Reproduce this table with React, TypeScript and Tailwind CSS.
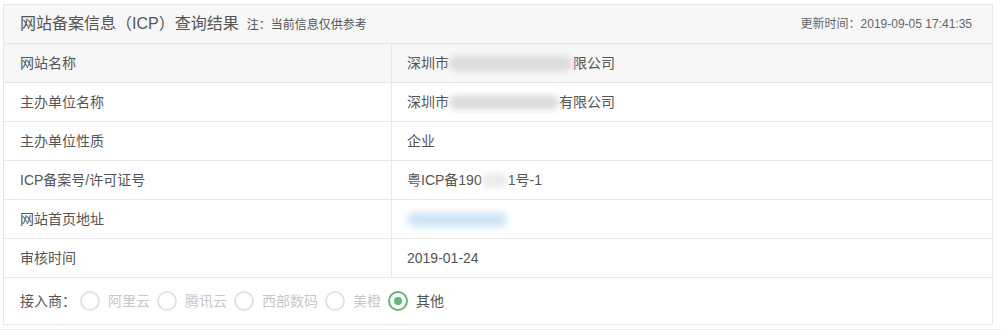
const FONT = "font-['Liberation_Sans','Noto_Sans_CJK_SC',sans-serif]";

type Row = { label: string; value: React.ReactNode; shaded?: boolean };

function Blur({ w, tone = 'gray' }: { w: number; tone?: 'gray' | 'blue' | 'light' }) {
  const bg = tone === 'blue' ? 'bg-[#cfe6f7]' : tone === 'light' ? 'bg-[#ebebeb]' : 'bg-[#dcdcdc]';
  return (
    <span
      className={`inline-block h-[15px] rounded-full blur-[3px] align-middle ${bg}`}
      style={{ width: w }}
    />
  );
}

const rows: Row[] = [
  {
    label: '网站名称',
    shaded: true,
    value: (
      <>
        深圳市<Blur w={124} />限公司
      </>
    ),
  },
  {
    label: '主办单位名称',
    value: (
      <>
        深圳市<Blur w={110} />有限公司
      </>
    ),
  },
  { label: '主办单位性质', value: '企业' },
  {
    label: 'ICP备案号/许可证号',
    value: (
      <>
        粤ICP备190<Blur w={26} tone="light" />1号-1
      </>
    ),
  },
  { label: '网站首页地址', value: <Blur w={100} tone="blue" /> },
  { label: '审核时间', value: '2019-01-24' },
];

const isps = ['阿里云', '腾讯云', '西部数码', '美橙', '其他'];

function Radio({ checked }: { checked?: boolean }) {
  return (
    <span
      className={`flex h-[20px] w-[20px] shrink-0 items-center justify-center rounded-full border-2 ${
        checked ? 'border-[#5fb878]' : 'border-[#e2e2e2]'
      }`}
    >
      {checked && <span className="h-[8px] w-[8px] rounded-full bg-[#5fb878]" />}
    </span>
  );
}

export default function App() {
  return (
    <div className={`${FONT} h-[330px] w-[1001px] overflow-hidden bg-white text-[#555]`}>
      <div className="pl-[3px] pt-[4px]">
        <div className="w-[990px] border border-[#e8e8e8]">
          <div className="flex h-[39px] items-center justify-between border-b border-[#e8e8e8] bg-[#f7f7f7] pl-[16px] pr-[20px]">
            <div className="flex items-baseline gap-[8px]">
              <span className="text-[16px]">网站备案信息（ICP）查询结果</span>
              <span className="text-[12px]">注：当前信息仅供参考</span>
            </div>
            <span className="text-[12px] text-[#666]">更新时间：2019-09-05 17:41:35</span>
          </div>

          {rows.map((row) => (
            <div
              key={row.label}
              className={`grid h-[39px] grid-cols-[388px_1fr] border-b border-[#e8e8e8] text-[14px] ${
                row.shaded ? 'bg-[#f7f7f7]' : 'bg-white'
              }`}
            >
              <div className="flex items-center border-r border-[#e8e8e8] pl-[16px]">{row.label}</div>
              <div className="flex items-center whitespace-nowrap pl-[15px]">{row.value}</div>
            </div>
          ))}

          <div className="flex h-[46px] items-center pl-[16px] text-[14px]">
            <span className="mr-[4px]">接入商：</span>
            {isps.map((name, i) => {
              const checked = i === isps.length - 1;
              return (
                <label key={name} className="mr-[7px] flex items-center gap-[8px]">
                  <Radio checked={checked} />
                  <span className={checked ? 'text-[#555]' : 'text-[#c8c8c8]'}>{name}</span>
                </label>
              );
            })}
          </div>
        </div>
        <div className="-ml-[3px] mt-[4px] border-t border-[#ececec]" />
      </div>
    </div>
  );
}
